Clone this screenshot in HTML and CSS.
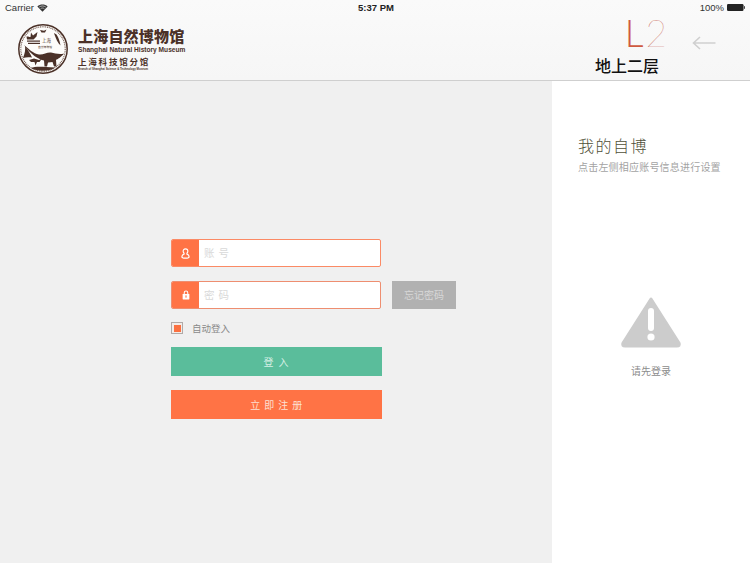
FILE: index.html
```html
<!DOCTYPE html>
<html lang="zh">
<head>
<meta charset="utf-8">
<title>上海自然博物馆</title>
<link rel="stylesheet" href="styles.css">
</head>
<body>
<div class="page">
  <header class="header">
    <div class="status">
      <div class="status-left">
        <span>Carrier</span>
        <svg class="wifi" viewBox="0 0 12 9" width="11" height="8"><path d="M6 8.6 L0.2 2.8 C3.4 -0.2 8.6 -0.2 11.8 2.8 Z" fill="#333"/><path d="M2.3 3.4 C4.5 1.8 7.5 1.8 9.7 3.4" fill="none" stroke="#f9f9f9" stroke-width=".7"/><path d="M3.9 5.2 C5.2 4.3 6.8 4.3 8.1 5.2" fill="none" stroke="#f9f9f9" stroke-width=".7"/></svg>
      </div>
      <span class="time">5:37 PM</span>
      <div class="status-right">
        <span>100%</span>
        <svg viewBox="0 0 18 7" width="18" height="7"><rect x="0" y="0" width="16.5" height="7" rx="1.2" fill="#222"/><rect x="16.8" y="2.2" width="1.2" height="2.6" fill="#444"/></svg>
      </div>
    </div>
    <div class="bar">
      <div class="brand">
        <svg class="emblem" viewBox="0 0 50 50" width="50" height="50">
          <circle cx="25" cy="25" r="24.2" fill="#fdfcfa" stroke="#4b3128" stroke-width="1.5"/>
          <circle cx="25" cy="25" r="22.2" fill="none" stroke="#6d5349" stroke-width="1.1" stroke-dasharray="1 .8"/>
          <path class="ink" d="M6 21 C11 25 15 29.500 21 30.500 C25 31.200 29 28 33 28.500 C37 29 41 31 46 29.500 C43 33.500 39.500 35 38 36 L38.500 42.500 L36 42.500 L34.500 38 L30 38.500 L29 42.500 L26.500 42.500 L26 36.500 C21 35.500 13 31 6 21 Z"/>
          <path class="ink" d="M5 34 C7 29 7.500 26 7 22 C10 26 12.500 30 14 33.500 C11 33 8 33 5 34 Z"/>
          <path class="ink" d="M8.500 12.500 C10.500 12 11.500 13.500 12.500 13 L13 8.500 L15 11.500 L19.500 8 L18.500 12.500 L15.500 15.500 L9 15.500 Z"/>
          <path class="ink" d="M36 9 L38.500 10.500 C40.500 13.500 41.500 16.500 42.500 21.500 C39.500 18.500 38 15 36 9 Z"/>
          <path class="ink" d="M11 36 L16 34.500 L21 36 L24 34.500 L21.500 38 L19 38 L17.500 41.500 L16.500 38 L13 38 Z"/>
          <path class="ink" d="M13 44 C17 42 24 42.500 37 43.500 C32 47.500 19 48 13 44 Z"/>
          <path class="ink" d="M22 6 L26 6.800 L28.500 5.500 L27 8.500 L23.500 8.500 Z"/>
          <rect class="ink" x="9" y="16.500" width="13" height="1.200"/>
          <rect class="ink" x="10" y="18.800" width="12" height="1.200"/>
          <text class="emblem-big" x="24" y="18">上海</text>
          <text class="emblem-small" x="20" y="23.500">自然博物馆</text>
        </svg>
        <div class="wordmark">
          <div class="wm-cn">上海自然博物馆</div>
          <div class="wm-en">Shanghai Natural History Museum</div>
          <div class="wm-sub">上海科技馆分馆</div>
          <div class="wm-tiny">Branch of Shanghai Science &amp; Technology Museum</div>
        </div>
      </div>
      <div class="level">
        <div class="level-code"><span class="level-l">L</span><span class="level-n">2</span></div>
        <div class="level-name">地上二层</div>
      </div>
      <svg class="back" viewBox="0 0 24 14" width="24" height="14"><path d="M23.500 7 H1.500 M8 1 L1.500 7 L8 13" fill="none" stroke="#cfcfcf" stroke-width="1.600"/></svg>
    </div>
  </header>
  <main class="main">
    <section class="login">
      <div class="rows">
        <div class="row">
          <div class="field">
            <span class="field-icon">
              <svg viewBox="0 0 10 12" width="9" height="11"><path d="M5 .8 C3.200 .8 2.400 2 2.400 3.500 C2.400 4.500 2.800 5.200 3.400 5.700 L3.400 6.700 C2 7.200 1 8 1 9.500 C1 10.700 2.200 11.200 5 11.200 C7.800 11.200 9 10.700 9 9.500 C9 8 8 7.200 6.600 6.700 L6.600 5.700 C7.200 5.200 7.600 4.500 7.600 3.500 C7.600 2 6.800 .8 5 .8 Z" fill="none" stroke="#fff" stroke-width="1.300"/></svg>
            </span>
            <span class="field-text">账 号</span>
          </div>
        </div>
        <div class="row">
          <div class="field field-pass">
            <span class="field-icon">
              <svg viewBox="0 0 10 12" width="8" height="10"><path d="M2.800 5 V3.200 C2.800 1.800 3.800 1 5 1 C6.200 1 7.200 1.800 7.200 3.200 V5" fill="none" stroke="#fff" stroke-width="1.300"/><rect x=".8" y="4.800" width="8.400" height="6.700" rx=".6" fill="#fff"/><rect x="4.300" y="6.500" width="1.400" height="2.800" fill="#ff7345"/></svg>
            </span>
            <span class="field-text">密 码</span>
          </div>
          <button class="forgot" type="button">忘记密码</button>
        </div>
      </div>
      <label class="remember">
        <span class="check"><span class="check-fill"></span></span>
        <span>自动登入</span>
      </label>
      <button class="action action-green" type="button">登 入</button>
      <button class="action action-orange" type="button">立 即 注 册</button>
    </section>
    <aside class="side">
      <h2 class="side-title">我的自博</h2>
      <p class="side-sub">点击左侧相应账号信息进行设置</p>
      <svg class="warn" viewBox="0 0 62 52" width="62" height="52">
        <path d="M31 3 L59 47 C60 49 59 50 57 50 H5 C3 50 2 49 3 47 Z" fill="#cccccc" stroke="#cccccc" stroke-width="3" stroke-linejoin="round"/>
        <rect x="28" y="12" width="6" height="23" rx="3" fill="#fff"/>
        <circle cx="31" cy="41" r="3.600" fill="#fff"/>
      </svg>
      <p class="warn-text">请先登录</p>
    </aside>
  </main>
</div>
</body>
</html>
```

FILE: styles.css
```css
* {
  box-sizing: border-box;
}

html,
body {
  margin: 0;
  padding: 0;
}

body {
  width: 750px;
  height: 563px;
  overflow: hidden;
  font-family: "Liberation Sans", "Noto Sans CJK SC", sans-serif;
}

.page {
  display: flex;
  flex-direction: column;
  height: 563px;
}

.header {
  height: 81px;
  flex: none;
  background: linear-gradient(#fafafa, #f6f6f6);
  border-bottom: 1px solid #cfcfcf;
}

.status {
  display: flex;
  align-items: center;
  justify-content: space-between;
  height: 15px;
  padding: 0 5px;
  font-size: 9.5px;
  color: #333;
}

.status-left,
.status-right {
  display: flex;
  align-items: center;
  gap: 3px;
  width: 90px;
}

.status-right {
  justify-content: flex-end;
}

.time {
  font-weight: bold;
  color: #222;
  margin-left: 2px;
}

.bar {
  display: flex;
  height: 65px;
}

.brand {
  display: flex;
  align-items: flex-start;
  gap: 10px;
  padding: 9px 0 0 18px;
  width: 595px;
}

.emblem {
  flex: none;
}

.ink {
  fill: #4b3128;
}

.emblem-big {
  font-size: 4.500px;
  fill: #4b3128;
}

.emblem-small {
  font-size: 2.800px;
  fill: #4b3128;
}

.wordmark {
  display: flex;
  flex-direction: column;
  color: #4b3128;
  white-space: nowrap;
}

.wm-cn {
  font-size: 15px;
  line-height: 16px;
  font-weight: 900;
  margin-top: 5px;
  letter-spacing: .2px;
}

.wm-en {
  font-size: 6.600px;
  line-height: 9px;
  font-weight: bold;
}

.wm-sub {
  font-size: 8.500px;
  line-height: 11px;
  font-weight: bold;
  letter-spacing: 1.800px;
  margin-top: 3px;
}

.wm-tiny {
  font-size: 2.850px;
  line-height: 3px;
  font-weight: bold;
}

.level {
  width: 70px;
  flex: none;
}

.level-code {
  font-family: Lato, sans-serif;
  font-size: 37px;
  line-height: 36px;
  text-align: right;
  margin-right: -2px;
}

.level-l {
  color: #cf5a40;
  font-weight: 300;
  letter-spacing: 2px;
}

.level-n {
  color: #cc6f5a;
  font-weight: 100;
}

.level-name {
  font-size: 16px;
  line-height: 18px;
  font-weight: 500;
  color: #111;
  margin-top: 7px;
}

.back {
  margin: 21px 0 0 27px;
  flex: none;
}

.main {
  flex: 1;
  display: flex;
  min-height: 0;
}

.login {
  width: 552px;
  flex: none;
  background: #f0f0f0;
  padding: 158px 0 0 171px;
  display: flex;
  flex-direction: column;
  align-items: flex-start;
}

.rows {
  display: flex;
  flex-direction: column;
  gap: 14px;
}

.row {
  display: flex;
  gap: 11px;
}

.field {
  width: 210px;
  height: 28px;
  display: flex;
  align-items: center;
  background: #fff;
  border: 1.500px solid #fb8a65;
  border-radius: 2px;
  overflow: hidden;
}

.field-pass {
  border-color: #ee8e70;
}

.field-icon {
  width: 27px;
  height: 100%;
  background: #ff7345;
  display: flex;
  align-items: center;
  justify-content: center;
  flex: none;
}

.field-text {
  font-size: 10.500px;
  color: #d9d9d9;
  margin: 0 0 2px 5px;
  letter-spacing: .5px;
}

.forgot {
  width: 64px;
  height: 28px;
  padding: 0 0 2px;
  border: 0;
  background: #b1b1b1;
  color: #d8d8d8;
  font: 10px "Liberation Sans", "Noto Sans CJK SC", sans-serif;
}

.remember {
  display: flex;
  align-items: center;
  gap: 9px;
  margin-top: 12px;
  height: 14px;
  font-size: 9.500px;
  color: #8a8a8a;
}

.check {
  width: 12px;
  height: 12px;
  background: #f3ece8;
  border: 1.500px solid #b0aaa8;
  display: flex;
  align-items: center;
  justify-content: center;
}

.check-fill {
  width: 7px;
  height: 7px;
  background: #fb7040;
}

.action {
  width: 211px;
  height: 29px;
  padding: 0;
  border: 0;
  font: 10px "Liberation Sans", "Noto Sans CJK SC", sans-serif;
  letter-spacing: 1px;
}

.action-green {
  margin-top: 12px;
  background: #5abd9b;
  color: #d5efe5;
}

.action-orange {
  margin-top: 14px;
  background: #ff7345;
  color: #fde0d3;
  letter-spacing: .6px;
}

.side {
  flex: 1;
  background: #fff;
  padding: 56px 0 0 26px;
  display: flex;
  flex-direction: column;
  position: relative;
}

.side-title {
  margin: 0;
  font-size: 16px;
  line-height: 20px;
  font-weight: 300;
  letter-spacing: 1.500px;
  color: #4f5038;
}

.side-sub {
  margin: 3px 0 0;
  font-size: 10px;
  line-height: 16px;
  letter-spacing: .2px;
  color: #a3a3a3;
}

.warn {
  margin: 120px 0 0 42px;
}

.warn-text {
  margin: 16px 0 0 53px;
  font-size: 10px;
  line-height: 16px;
  color: #8c8c8c;
}
```
